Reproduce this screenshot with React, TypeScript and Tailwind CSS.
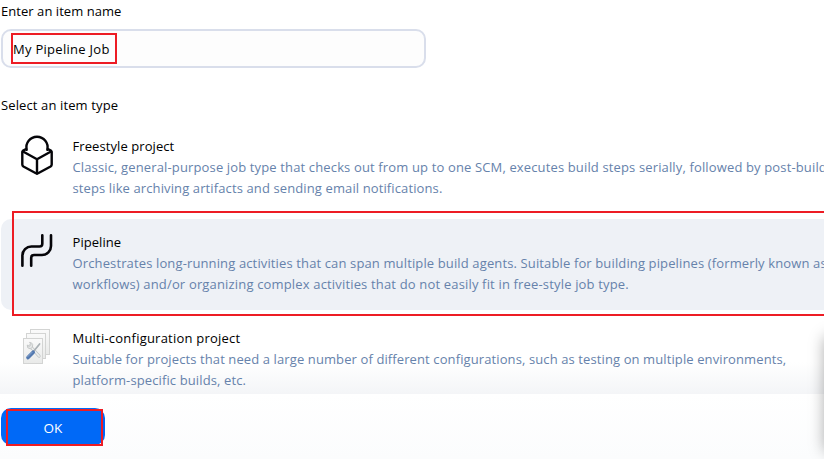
import type { ReactNode } from "react";

function FreestyleIcon() {
  return (
    <svg viewBox="0 0 40 44" className="mt-[7px] h-11 w-10" fill="none" stroke="#050509" strokeWidth="2.4" strokeLinejoin="round" strokeLinecap="round">
      <path d="M8.7 14.9 A10.6 10.6 0 1 1 29.3 14.9" />
      <path d="M7.6 14.7 L4.8 16.4 Q4.3 16.8 4.3 17.5 V30 Q4.3 31.3 5.4 32 L17.9 38.8 Q19 39.4 20.1 38.8 L32.6 32 Q33.7 31.3 33.7 30 V17.5 Q33.7 16.8 33.2 16.4 L30.4 14.7" transform="translate(0 -.5)" />
      <path d="M5 16.5 L19 24.3 L33 16.5 M19 24.3 V38.5" />
    </svg>
  );
}

function PipelineIcon() {
  return (
    <svg viewBox="0 0 40 44" className="mt-[5px] h-11 w-10" fill="none" stroke="#050509" strokeWidth="2.6" strokeLinejoin="round" strokeLinecap="round">
      <path d="M4.4 36.7 V26.5 A9 9 0 0 1 13.4 17.5 H21.5 Q24.3 17.5 24.3 14.7 V6.2" />
      <path d="M13.2 36.7 V28.8 Q13.2 26 16 26 H24 A9 9 0 0 0 33 17 V6.2" />
    </svg>
  );
}

function MatrixIcon() {
  return (
    <svg viewBox="0 0 40 44" className="mt-1 h-11 w-10">
      <defs>
        <linearGradient id="sheet" x1="0" y1="0" x2="0" y2="1">
          <stop offset="0" stopColor="#fafafa" />
          <stop offset="1" stopColor="#e9eae9" />
        </linearGradient>
      </defs>
      <g fill="url(#sheet)" stroke="#d3d4d3" strokeWidth="1">
        <rect x="12.5" y="5.5" width="19" height="25" />
        <rect x="8.5" y="9.5" width="19" height="25" />
        <rect x="5.5" y="14.5" width="19" height="25" />
      </g>
      <path d="M12 22 L21 32" stroke="#bfc2c2" strokeWidth="3.2" strokeLinecap="round" />
      <path d="M12 22 L21 32" stroke="#eceeee" strokeWidth="1.8" strokeLinecap="round" />
      <path d="M9.2 21 Q8.8 24.8 12.3 24.8 Q15.4 24 14.7 20.5 Q13.8 18.2 11.5 18.4 L13 20.4 L11.3 22.5 Z" fill="#e4e6e6" stroke="#bfc2c2" strokeWidth=".8" />
      <path d="M15.5 27.5 L21.6 20" stroke="#a9b0b4" strokeWidth="1.7" strokeLinecap="round" />
      <path d="M10 33.6 L15.2 28.2" stroke="#5379b0" strokeWidth="3.6" strokeLinecap="round" />
      <path d="M9.8 32.6 L14.2 28.2" stroke="#86a5cd" strokeWidth="1" strokeLinecap="round" />
    </svg>
  );
}

type Line = { text: string; spacing: string };

function Item({ icon, title, titleSpacing, lines, selected }: { icon: ReactNode; title: string; titleSpacing: string; lines: Line[]; selected?: boolean }) {
  return (
    <div className={`relative ml-px flex h-[91px] shrink-0 rounded-l-[10px] pl-[17px] pt-[13px] ${selected ? "bg-[#eef1f6]" : ""}`}>
      <div className="-mt-2 w-[54.5px] shrink-0">{icon}</div>
      <div className="relative z-10 whitespace-nowrap leading-[21px] text-[#6682ab]">
        <div className={`text-black ${titleSpacing}`}><span>{title}</span></div>
        {lines.map((l) => (
          <div key={l.text} className={l.spacing}><span>{l.text}</span></div>
        ))}
      </div>
      {selected && <div className="absolute -right-1 -top-2 left-[11px] h-[105px] border-2 border-[#ed1c24]" />}
    </div>
  );
}

export default function App() {
  return (
    <div className="relative flex h-[459px] w-[824px] flex-col overflow-hidden bg-white font-['Open_Sans','Noto_Sans',sans-serif] text-[13px] text-black">
      <label className="h-[29px] shrink-0 pl-px pt-px leading-[21px] tracking-[0.05px]">Enter an item name</label>
      <div className="relative ml-px flex h-[39px] w-[425px] shrink-0 items-center rounded-[10px] border-2 border-[#d9deeb] bg-[#fdfdfd] pl-[10px] pt-[3px]">
        <span className="tracking-[0.28px]">My Pipeline Job</span>
        <div className="absolute left-2 top-[2px] h-[31px] w-[106px] border-2 border-[#ed1c24]" />
      </div>
      <div className="h-[55px] shrink-0 pl-px pt-[27px] leading-[21px] tracking-[0.12px]">Select an item type</div>
      <div className="flex h-[271px] shrink-0 flex-col gap-[5px] overflow-hidden">
        <Item
          icon={<FreestyleIcon />}
          title="Freestyle project"
          titleSpacing="tracking-[0.08px]"
          lines={[
            { text: "Classic, general-purpose job type that checks out from up to one SCM, executes build steps serially, followed by post-build", spacing: "tracking-[0.14px]" },
            { text: "steps like archiving artifacts and sending email notifications.", spacing: "tracking-[0.115px]" },
          ]}
        />
        <Item
          selected
          icon={<PipelineIcon />}
          title="Pipeline"
          titleSpacing="tracking-[0.06px]"
          lines={[
            { text: "Orchestrates long-running activities that can span multiple build agents. Suitable for building pipelines (formerly known as", spacing: "tracking-[0.13px]" },
            { text: "workflows) and/or organizing complex activities that do not easily fit in free-style job type.", spacing: "tracking-[0.165px]" },
          ]}
        />
        <Item
          icon={<MatrixIcon />}
          title="Multi-configuration project"
          titleSpacing="tracking-[0.22px]"
          lines={[
            { text: "Suitable for projects that need a large number of different configurations, such as testing on multiple environments,", spacing: "tracking-[0.107px]" },
            { text: "platform-specific builds, etc.", spacing: "tracking-[0.12px]" },
          ]}
        />
      </div>
      <div className="relative h-[65px] shrink-0 bg-linear-to-b from-white to-[#fbfcfd] pl-px pt-[14px]">
        <div className="pointer-events-none absolute -top-8 left-0 h-8 w-full bg-linear-to-b from-transparent to-[#e6e9ee]/45" />
        <button className="relative flex h-[37px] w-[104px] items-center justify-center rounded-[10px] bg-[#0069f7] pt-[4px] text-[13.5px] text-white">
          <span>OK</span>
          <span className="absolute left-[5px] top-px h-[37px] w-[97px] border-2 border-[#ed1c24]" />
        </button>
      </div>
      <div className="absolute left-[826px] top-[338px] h-[112px] w-5 shadow-[0_0_16px_1px_rgba(0,0,0,0.36)]" />
    </div>
  );
}
